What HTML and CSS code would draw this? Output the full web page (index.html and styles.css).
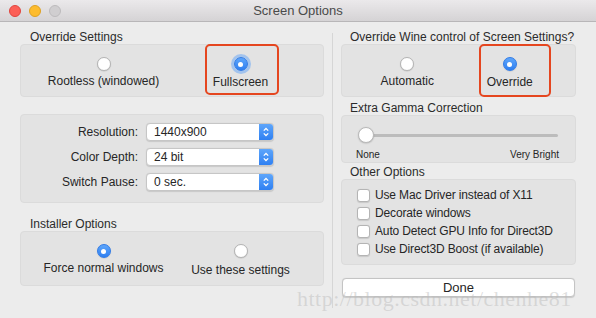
FILE: index.html
```html
<!DOCTYPE html>
<html lang="en">

<head>
  <meta charset="UTF-8" />
  <meta name="viewport" content="width=device-width, initial-scale=1.0" />
  <title>Screen Options</title>
  <link rel="stylesheet" href="styles.css">
</head>

<body>

  <div class="window">
    <div class="titlebar">
      <div class="lights">
        <span class="light red"></span>
        <span class="light yellow"></span>
        <span class="light gray"></span>
      </div>
      <span class="title">Screen Options</span>
    </div>

    <div class="content">
      <!-- left column -->
      <div class="col col-left">
        <div class="group-label">Override Settings</div>
        <div class="box radios">
          <div class="opt">
            <span class="radio"></span>
            <span class="opt-text">Rootless (windowed)</span>
          </div>
          <div class="opt marked">
            <span class="radio on focus"></span>
            <span class="opt-text">Fullscreen</span>
          </div>
        </div>

        <div class="box popups">
          <label>Resolution:</label>
          <div class="popup"><span>1440x900</span><span class="arrows"><svg viewBox="0 0 14 18"><path d="M4.5 7.5 L7 5 L9.5 7.5 M4.5 10.5 L7 13 L9.5 10.5" fill="none" stroke="#fff" stroke-width="1.4" /></svg></span></div>
          <label>Color Depth:</label>
          <div class="popup"><span>24 bit</span><span class="arrows"><svg viewBox="0 0 14 18"><path d="M4.5 7.5 L7 5 L9.5 7.5 M4.5 10.5 L7 13 L9.5 10.5" fill="none" stroke="#fff" stroke-width="1.4" /></svg></span></div>
          <label>Switch Pause:</label>
          <div class="popup"><span>0 sec.</span><span class="arrows"><svg viewBox="0 0 14 18"><path d="M4.5 7.5 L7 5 L9.5 7.5 M4.5 10.5 L7 13 L9.5 10.5" fill="none" stroke="#fff" stroke-width="1.4" /></svg></span></div>
        </div>

        <div class="group-label installer">Installer Options</div>
        <div class="box radios tall">
          <div class="opt">
            <span class="radio on"></span>
            <span class="opt-text">Force normal windows</span>
          </div>
          <div class="opt">
            <span class="radio"></span>
            <span class="opt-text low">Use these settings</span>
          </div>
        </div>
      </div>

      <div class="divider"></div>

      <!-- right column -->
      <div class="col col-right">
        <div class="group-label">Override Wine control of Screen Settings?</div>
        <div class="box radios">
          <div class="opt">
            <span class="radio"></span>
            <span class="opt-text">Automatic</span>
          </div>
          <div class="opt marked marked-right">
            <span class="radio on"></span>
            <span class="opt-text">Override</span>
          </div>
        </div>

        <div class="group-label gap-s">Extra Gamma Correction</div>
        <div class="box slider">
          <div class="track">
            <span class="knob"></span>
            <span class="line"></span>
          </div>
          <div class="ticks">
            <span>None</span>
            <span>Very Bright</span>
          </div>
        </div>

        <div class="group-label gap-xs">Other Options</div>
        <div class="box checks">
          <div class="check"><span class="checkbox"></span>Use Mac Driver instead of X11</div>
          <div class="check"><span class="checkbox"></span>Decorate windows</div>
          <div class="check"><span class="checkbox"></span>Auto Detect GPU Info for Direct3D</div>
          <div class="check"><span class="checkbox"></span>Use Direct3D Boost (if available)</div>
        </div>

        <button class="done">Done</button>
      </div>
    </div>

    <div class="watermark">http://blog.csdn.net/chenhe81</div>
  </div>

</body>

</html>
```

FILE: styles.css
```css
body {
  margin: 0;
  font-family: "Liberation Sans", Arial, sans-serif;
  font-size: 12px;
  color: #262626;
  background: #ececec;
}

.window {
  position: relative;
  width: 596px;
  height: 318px;
  overflow: hidden;
  background: #ececec;
}

.titlebar {
  height: 21px;
  border-bottom: 1px solid #b8b6b8;
  background: linear-gradient(to bottom, #ebe9eb, #d5d3d5);
  display: flex;
  align-items: center;
  position: relative;
}

.lights {
  display: flex;
  gap: 8px;
  padding-left: 9px;
}

.light {
  width: 12px;
  height: 12px;
  border-radius: 50%;
  box-sizing: border-box;
}

.red {
  background: #fc5f57;
  border: 1px solid #e0443e;
}

.yellow {
  background: #fdbc2e;
  border: 1px solid #dea123;
}

.gray {
  background: #d0ced0;
  border: 1px solid #bdbbbd;
}

.title {
  position: absolute;
  left: 0;
  right: 0;
  text-align: center;
  font-size: 13px;
  color: #4a4a4a;
}

.content {
  display: flex;
  padding: 8px 20px 0 20px;
}

.col {
  display: flex;
  flex-direction: column;
}

.col-left {
  width: 304px;
}

.col-right {
  width: 235px;
}

.divider {
  width: 1px;
  background: #d6d6d6;
  margin: 3px 8px 0;
  height: 275px;
}

.group-label {
  line-height: 14px;
  height: 14px;
  padding-left: 10px;
  color: #2b2b2b;
  white-space: nowrap;
}

.col-right .group-label {
  padding-left: 9px;
}

.group-label.installer {
  margin-top: 14px;
}

.group-label.gap-s {
  margin-top: 4px;
}

.group-label.gap-xs {
  margin-top: 2px;
}

.box {
  background: #e3e3e3;
  border: 1px solid #dbdbdb;
  border-radius: 4px;
  box-sizing: border-box;
}

/* radio groups */
.radios {
  height: 53px;
  display: grid;
  grid-template-columns: 1fr 1fr;
  padding: 0 14px;
}

.radios.tall {
  height: 55px;
}

.opt {
  position: relative;
  display: flex;
  flex-direction: column;
  align-items: center;
  padding-top: 12px;
}

.opt-text {
  margin-top: 3px;
  line-height: 14px;
  white-space: nowrap;
}

.opt-text.low {
  margin-top: 5px;
}

.marked .opt-text {
  margin-top: 4px;
}

.marked::after {
  content: '';
  position: absolute;
  top: -1px;
  bottom: 1px;
  left: 50%;
  width: 74px;
  margin-left: -36px;
  border: 2.5px solid #e5461f;
  border-radius: 5px;
  box-sizing: border-box;
}

.marked-right::after {
  bottom: -1px;
  width: 72px;
  margin-left: -31px;
}

.radio {
  width: 14px;
  height: 14px;
  border-radius: 50%;
  box-sizing: border-box;
  background: #fff;
  border: 1px solid #b4b4b4;
  box-shadow: 0 0.5px 1px rgba(0, 0, 0, 0.15);
  position: relative;
}

.radio.on {
  background: linear-gradient(to bottom, #5ea6fb, #2e7ff1);
  border: 1px solid #2f7ae6;
}

.radio.on::after {
  content: '';
  position: absolute;
  width: 5px;
  height: 5px;
  border-radius: 50%;
  background: #fff;
  left: 3.5px;
  top: 3.5px;
}

.radio.focus {
  box-shadow: 0 0 0 3px rgba(110, 170, 245, 0.55);
}

/* popups */
.popups {
  margin-top: 17px;
  height: 89px;
  display: grid;
  grid-template-columns: 117px 128px;
  grid-auto-rows: 18px;
  column-gap: 8px;
  row-gap: 7px;
  padding-top: 8px;
}

.popups label {
  text-align: right;
  line-height: 18px;
  color: #262626;
}

.popup {
  display: flex;
  align-items: stretch;
  background: #fff;
  border: 1px solid #c6c6c6;
  border-radius: 4px;
  box-sizing: border-box;
  overflow: hidden;
  box-shadow: 0 0.5px 1px rgba(0, 0, 0, 0.12);
}

.popup span:first-child {
  flex: 1;
  padding-left: 7px;
  line-height: 16px;
}

.arrows {
  width: 14px;
  background: linear-gradient(to bottom, #5ea6fb, #2f80f2);
  display: flex;
}

.arrows svg {
  width: 14px;
  height: 16px;
}

/* slider */
.slider {
  height: 48px;
  padding: 11px 16px 0 16px;
}

.track {
  display: flex;
  align-items: center;
  height: 16px;
}

.knob {
  width: 16px;
  height: 16px;
  border-radius: 50%;
  background: #fff;
  border: 1px solid #b9b9b9;
  box-sizing: border-box;
  box-shadow: 0 0.5px 1.5px rgba(0, 0, 0, 0.2);
  position: relative;
  z-index: 1;
}

.line {
  flex: 1;
  height: 3px;
  margin-left: -8px;
  margin-right: 1px;
  border-radius: 2px;
  background: #bcbcbc;
}

.ticks {
  display: flex;
  justify-content: space-between;
  font-size: 10px;
  line-height: 12px;
  margin-top: 6px;
  margin-left: -2px;
}

/* checkboxes */
.checks {
  height: 86px;
  padding: 6px 0 0 15px;
}

.check {
  display: flex;
  align-items: center;
  gap: 5px;
  height: 18px;
  white-space: nowrap;
  letter-spacing: -0.15px;
}

.checkbox {
  width: 13px;
  height: 13px;
  box-sizing: border-box;
  background: #fff;
  border: 1px solid #b4b4b4;
  border-radius: 3px;
  box-shadow: 0 0.5px 1px rgba(0, 0, 0, 0.12);
}

.done {
  margin-top: 13px;
  margin-left: 1px;
  width: 233px;
  height: 19px;
  padding: 0;
  background: #fff;
  border: 1px solid #c4c4c4;
  border-radius: 4px;
  font-family: "Liberation Sans", Arial, sans-serif;
  font-size: 13px;
  color: #262626;
  box-shadow: 0 0.5px 1px rgba(0, 0, 0, 0.15);
}

.watermark {
  position: absolute;
  left: 297px;
  top: 286px;
  font-family: "Liberation Serif", "Times New Roman", serif;
  font-size: 22px;
  letter-spacing: 0.5px;
  color: rgba(185, 185, 185, 0.45);
  white-space: nowrap;
  pointer-events: none;
}
```
